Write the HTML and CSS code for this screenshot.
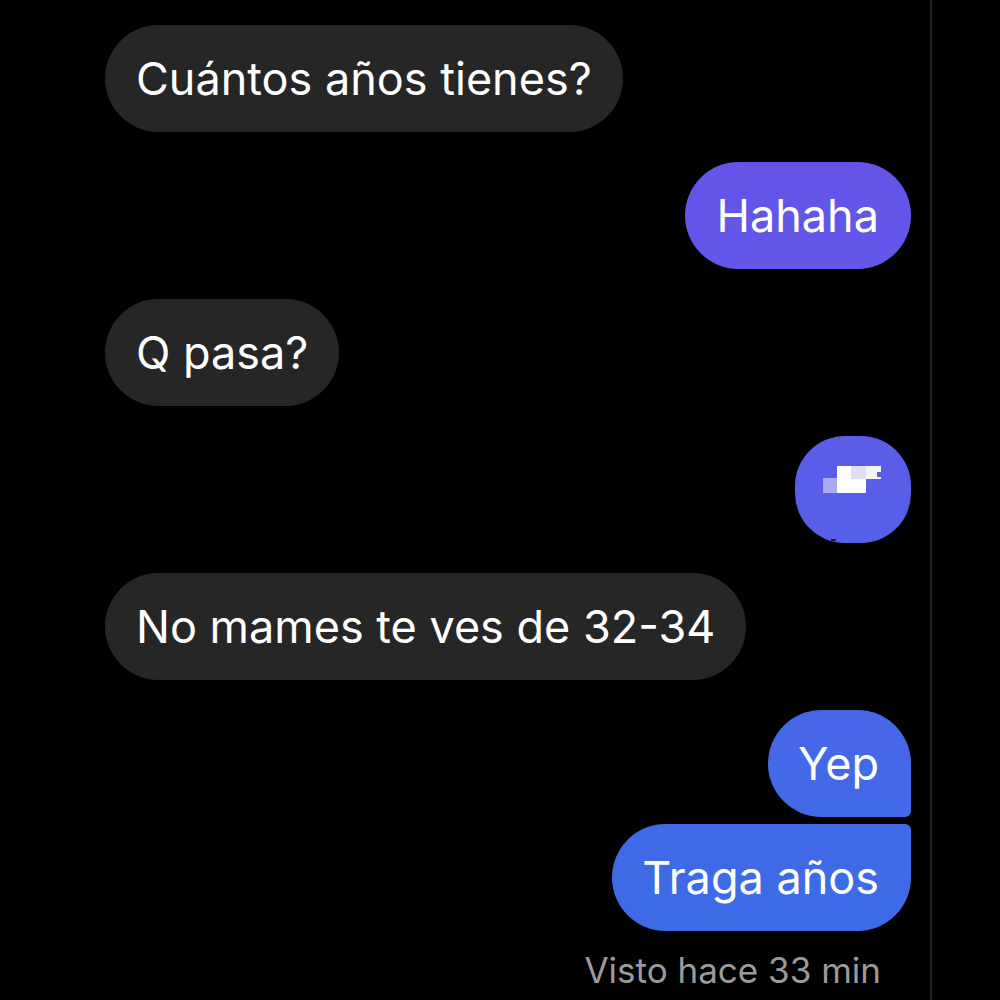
FILE: index.html
```html
<!DOCTYPE html>
<html lang="es">
<head>
<meta charset="utf-8">
<link rel="stylesheet" href="styles.css">
</head>
<body>
<div class="thread">
  <div class="row in"><div class="bubble dark">Cuántos años tienes?</div></div>
  <div class="row out"><div class="bubble me">Hahaha</div></div>
  <div class="row in"><div class="bubble dark">Q pasa?</div></div>
  <div class="row out"><div class="bubble me blur">
    <span class="px p1"></span><span class="px p2"></span><span class="px p3"></span><span class="px p4"></span><span class="px p5"></span><span class="px p6"></span>
  </div></div>
  <div class="row in"><div class="bubble dark">No mames te ves de 32-34</div></div>
  <div class="group">
    <div class="row out"><div class="bubble me first">Yep</div></div>
    <div class="row out"><div class="bubble me last">Traga años</div></div>
  </div>
  <div class="seen">Visto hace 33 min</div>
</div>
</body>
</html>
```
FILE: styles.css
```css
html, body {
  margin: 0;
  padding: 0;
  background: #000;
}
body {
  font-family: Inter, "Liberation Sans", Roboto, sans-serif;
  height: 1000px;
  overflow: hidden;
}
.thread {
  width: 932px;
  height: 1000px;
  box-sizing: border-box;
  border-right: 2px solid #242424;
  padding: 25px 19px 0 105px;
  display: flex;
  flex-direction: column;
  gap: 30px;
}
.row {
  display: flex;
}
.row.in { justify-content: flex-start; }
.row.out { justify-content: flex-end; }
.bubble {
  font-size: 45px;
  line-height: 47px;
  color: #fff;
  padding: 30px 31px;
  border-radius: 54px;
  white-space: nowrap;
}
.dark { background: #262626; }
.me {
  background: linear-gradient(180deg, #6a4fe8 0px, #5a5de8 480px, #4468e8 760px, #3c6be6 930px);
  background-attachment: fixed;
  padding-left: 32px;
  padding-right: 32px;
}
.group {
  display: flex;
  flex-direction: column;
  gap: 7px;
}
.first { border-bottom-right-radius: 6px; padding-left: 30px; }
.last { border-top-right-radius: 6px; padding-left: 30px; }
.blur {
  width: 116px;
  height: 107px;
  padding: 0;
  box-sizing: border-box;
  border-radius: 50px;
  position: relative;
}
.px {
  position: absolute;
  background: #fff;
}
.p1 { left: 28px; top: 42px; width: 14px; height: 15px; background: #a9abf2; }
.p2 { left: 42px; top: 30px; width: 29px; height: 27px; }
.p3 { left: 56px; top: 30px; width: 15px; height: 13px; background: #dfe0f8; }
.p4 { left: 71px; top: 30px; width: 15px; height: 13px; background: #f4f4fc; }
.p5 { left: 82px; top: 36px; width: 4px; height: 5px; background: #5a5de8; }
.p6 { left: 36px; top: 103px; width: 5px; height: 2px; background: #1b1b40; }
.seen {
  margin-top: -11px;
  text-align: right;
  padding-right: 30px;
  font-size: 35px;
  line-height: 40px;
  color: #9b9b9b;
}
```
